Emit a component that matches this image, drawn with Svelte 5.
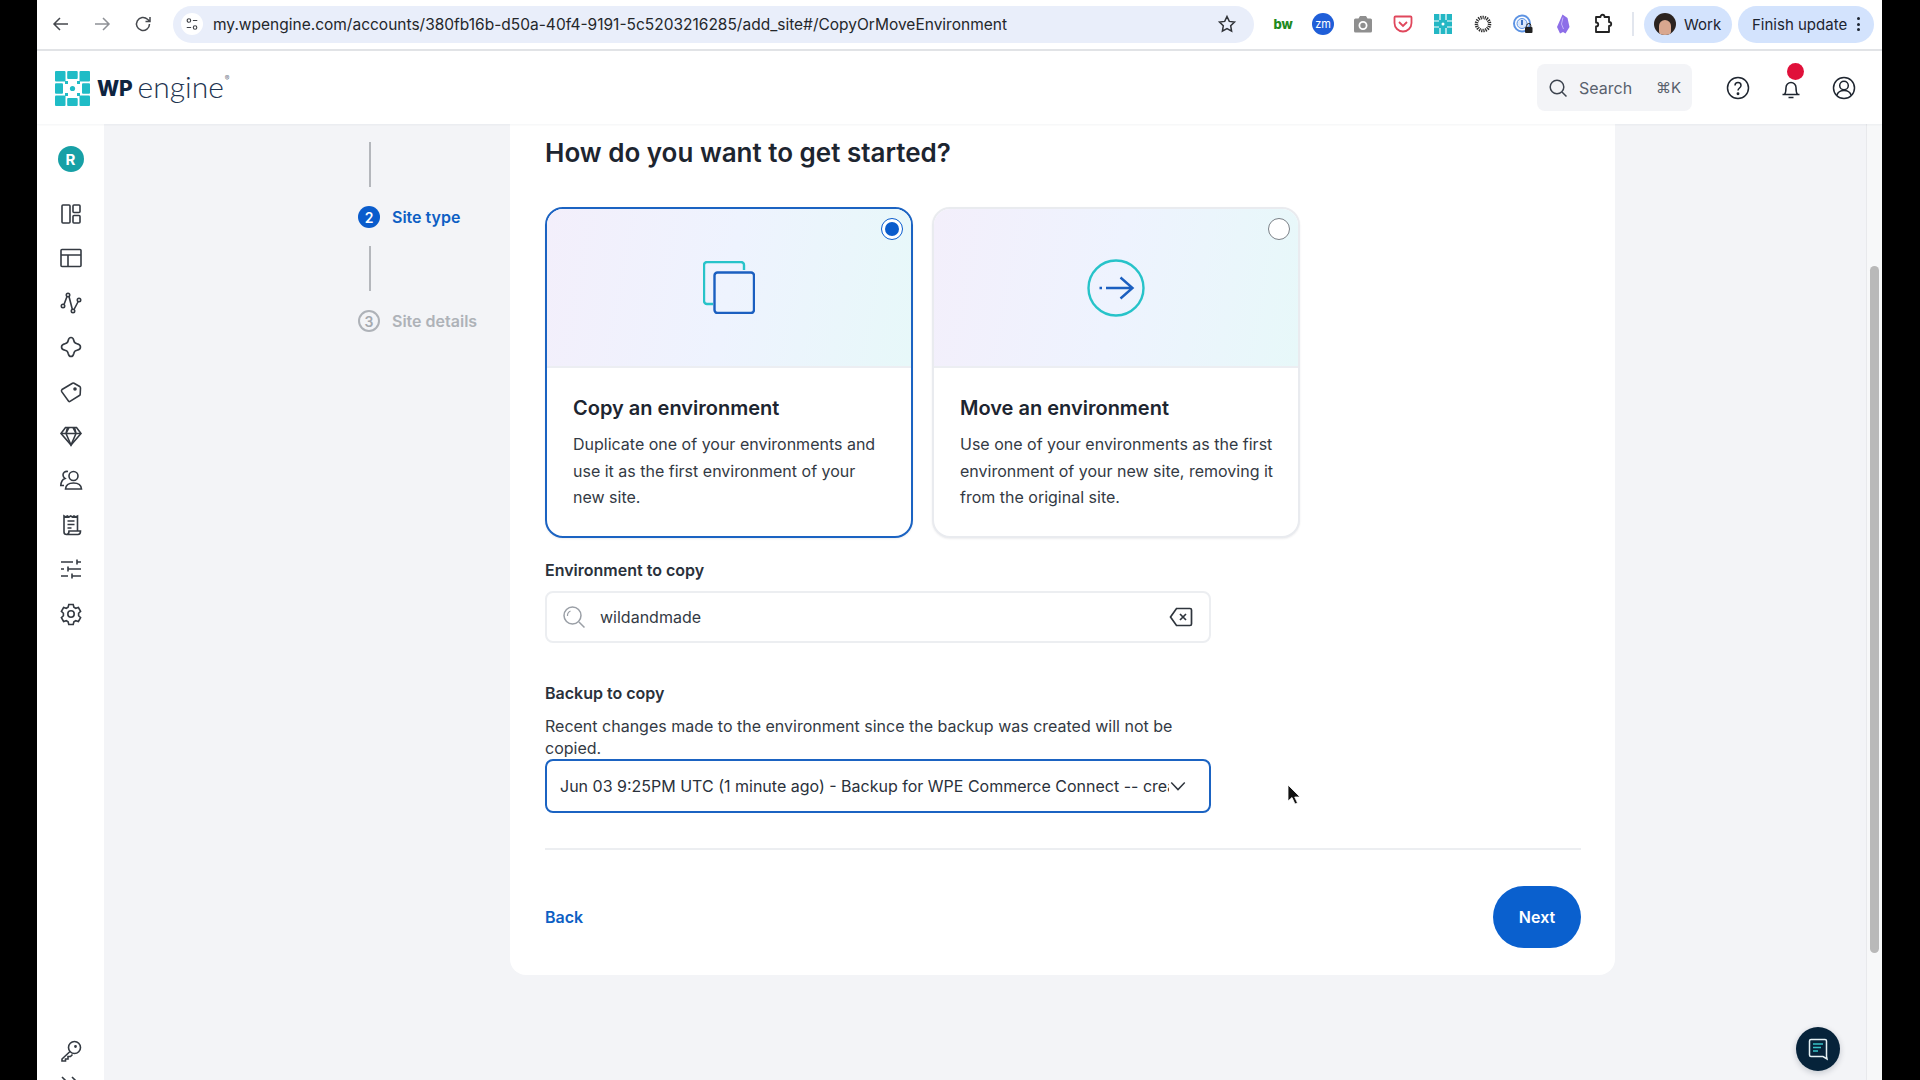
<script>
  const nav = [
    '<rect x="3" y="3" width="8" height="18" rx="1"/><rect x="14" y="3" width="7" height="7.5" rx="1"/><rect x="14" y="13.5" width="7" height="7.5" rx="1"/>',
    '<rect x="2" y="3.5" width="20" height="17" rx="1"/><path d="M2 9h20M9 9v11.5"/>',
    '<circle cx="4" cy="15" r="1.7"/><circle cx="9" cy="4" r="1.7"/><circle cx="14" cy="20" r="1.7"/><circle cx="20" cy="9" r="1.7"/><path d="M5 13.5 8 5.5M10 5.5l3.3 12.7M15 18.5l4.2-8"/>',
    '<path d="M12 2.5c1.6 0 2.4 1 2.8 3 .3 1.8 1.3 2.8 3.2 3.2 2 .4 3.5 1.5 3.5 3.3s-1.5 2.9-3.5 3.3c-1.9.4-2.9 1.4-3.2 3.2-.4 2-1.2 3-2.8 3s-2.4-1-2.8-3c-.3-1.8-1.3-2.8-3.2-3.2-2-.4-3.5-1.5-3.5-3.3s1.5-2.9 3.5-3.3c1.9-.4 2.9-1.4 3.2-3.2.4-2 1.2-3 2.8-3z"/>',
    '<path d="M3 9.5 13.5 3.2c.5-.3 1-.3 1.5 0l5.7 3.3c.5.3.8.8.8 1.4l-.3 6.3c0 .6-.3 1-.8 1.3L11 21.4c-.5.3-1 .2-1.4-.2L2.7 11.6c-.3-.6-.2-1.6.3-2.1z"/><circle cx="16" cy="9" r="1" fill="currentColor"/>',
    '<path d="M6.5 3.5h11L22 9.5 12 21 2 9.5z"/><path d="M2 9.5h20M8.5 3.5 7 9.5 12 21l5-11.5-1.500-6M7 9.500l3-6M17 9.500l-3-6"/>',
    '<circle cx="14.500" cy="8" r="4.500"/><path d="M6.500 21c.3-4 2.800-6 8-6s7.700 2 8 6zM9 3.500C6 3 4 4.500 4 7c0 1.600.8 2.700 2 3.500-2.700 1-4 3.600-4.200 7H5"/>',
    '<path d="M5 19V3l1.700 1L8.300 3l1.700 1 1.700-1 1.700 1L15 3l1.700 1L18.500 3v15M8.500 8h7M8.500 11.500h7M8.500 15h4M5 19c0 1.500 1 2.500 2.500 2.500h11.500c1.500 0 2.500-1 2.500-3.500H10c0 2-1 3.500-2.500 3.500"/>',
    '<path d="M2 5h12M18 5h4M18 2.500v5M2 12h3M9 12h13M9 9.500v5M2 19h7M13 19h9M13 16.500v5"/>',
    '<path d="M9.800 2.500h4.400l.7 2.800 1.800 1 2.700-.8 2.200 3.800-2 2v2.400l2 2-2.200 3.800-2.700-.8-1.800 1-.7 2.800H9.800l-.7-2.800-1.800-1-2.700.8-2.200-3.800 2-2v-2.400l-2-2 2.200-3.800 2.700.8 1.800-1z"/><circle cx="12" cy="12" r="3.200"/>'
  ];
</script>

<div class="frame">
  <div class="edge"></div>
  <div class="browser">
    <header class="chrome">
      <div class="tools">
        <svg viewBox="0 0 20 20"><path d="M17 10H3.500M9 4l-6 6 6 6"/></svg>
        <svg class="dim" viewBox="0 0 20 20"><path d="M3 10h13.500M11 4l6 6-6 6"/></svg>
        <svg viewBox="0 0 20 20"><path d="M16.500 10a6.500 6.500 0 1 1-2-4.700L17 7.500M17 3v4.500h-4.500"/></svg>
      </div>
      <div class="url">
        <span class="tune"><svg viewBox="0 0 16 16"><circle cx="4.500" cy="4" r="2"/><path d="M9 4h5M2 12h5"/><circle cx="11.500" cy="12" r="2"/></svg></span>
        <span class="addr">my.wpengine.com/accounts/380fb16b-d50a-40f4-9191-5c5203216285/add_site#/CopyOrMoveEnvironment</span>
        <svg class="star" viewBox="0 0 20 20"><path d="m10 2.500 2.300 4.900 5.200.7-3.800 3.700.9 5.300L10 14.500l-4.600 2.600.9-5.300L2.500 8.100l5.200-.7z"/></svg>
      </div>
      <div class="exts">
        <span class="ext bw">bw</span>
        <span class="ext zm">zm</span>
        <svg class="ext" viewBox="0 0 22 22"><path d="M2 7a1.500 1.500 0 0 1 1.500-1.500h3L8 3h6l1.500 2.500h3A1.500 1.500 0 0 1 20 7v11a1.500 1.500 0 0 1-1.500 1.500h-15A1.500 1.500 0 0 1 2 18z" fill="#8f8f8f"/><circle cx="11" cy="12.500" r="3.600" fill="none" stroke="#fff" stroke-width="1.800"/></svg>
        <svg class="ext" viewBox="0 0 22 22"><path d="M3.500 3.500h15a1 1 0 0 1 1 1V10a8.500 8.500 0 0 1-17 0V4.500a1 1 0 0 1 1-1z" fill="#fff" stroke="#e0475c" stroke-width="1.800"/><path d="m7 9 4 4 4-4" fill="none" stroke="#e0475c" stroke-width="1.800"/></svg>
        <svg class="ext" viewBox="0 0 22 22"><rect x="2" y="1" width="18" height="20" fill="#23b7c4"/><path d="M8 1v6M14 1v6M8 15v6M14 15v6M2 8h5M15 8h5M2 14h5M15 14h5" stroke="#fff" stroke-width="1.200"/><circle cx="11" cy="11" r="1.500" fill="#fff"/></svg>
        <svg class="ext" viewBox="0 0 22 22"><circle cx="11" cy="11" r="6.500" fill="none" stroke="#2b2b2b" stroke-width="3.600" stroke-dasharray="1.200 .9"/><circle cx="11" cy="11" r="4.500" fill="#fff"/></svg>
        <svg class="ext" viewBox="0 0 22 22"><circle cx="10" cy="10.500" r="8" fill="none" stroke="#5d93e3" stroke-width="2"/><circle cx="10" cy="10.500" r="5" fill="#dbe8fb" stroke="#5d93e3"/><path d="M10 7v5" stroke="#2a63ba" stroke-width="1.800"/><rect x="13" y="14" width="7.500" height="6" rx="1" fill="#222"/><path d="M14.800 14v-1.500a2 2 0 0 1 4 0V14" fill="none" stroke="#222"/></svg>
        <svg class="ext" viewBox="0 0 22 22"><path d="M10.500 1.500 15.500 5l2 9-4 6.500-2.500-1.500-3 1.500-3-6.500z" fill="#8d6ee8"/><path d="M11 4.500 9.500 11l2 5" fill="none" stroke="#c4b3f7"/></svg>
        <svg class="ext" viewBox="0 0 22 22"><path d="M4 4h4.500c0-3 4-3 4 0H17v5c3 0 3 4 0 4v6H4v-5.500c3 0 3-4 0-4z" fill="#fff" stroke="#222" stroke-width="1.800" stroke-linejoin="round"/></svg>
      </div>
      <div class="sep"></div>
      <div class="pill work"><span class="face"><span class="skin"></span></span>Work</div>
      <div class="pill finish">Finish update<span class="kebab"><i></i><i></i><i></i></span></div>
    </header>

    <div class="topbar">
      <div class="logo">
        <svg class="mark" viewBox="0 0 35 35">
          <g fill="#1fbcc6">
            <rect width="10.500" height="10.500" rx="1"/><rect x="12.200" width="10.500" height="8" rx="1"/><rect x="24.500" width="10.500" height="10.500" rx="1"/>
            <rect y="12.200" width="8" height="10.500" rx="1"/><rect x="27" y="12.200" width="8" height="10.500" rx="1"/>
            <rect y="24.500" width="10.500" height="10.500" rx="1"/><rect x="12.200" y="27" width="10.500" height="8" rx="1"/><rect x="24.500" y="24.500" width="10.500" height="10.500" rx="1"/>
            <circle cx="17.500" cy="17.500" r="2.600"/><rect x="10" y="10" width="3" height="3"/><rect x="22" y="10" width="3" height="3"/><rect x="10" y="22" width="3" height="3"/><rect x="22" y="22" width="3" height="3"/>
          </g>
        </svg>
        <span class="wp">WP</span><span class="engine">engine</span><span class="reg">®</span>
      </div>
      <div class="search">
        <svg viewBox="0 0 20 20"><circle cx="9" cy="9" r="6.800"/><path d="m14 14 4.500 4.500"/></svg>
        <span class="s-label">Search</span><span class="s-key">⌘K</span>
      </div>
      <div class="top-icons">
        <svg viewBox="0 0 26 26"><circle cx="13" cy="13" r="10.500"/><path d="M10 10.500c0-4 6-4 6 0 0 2.500-3 2.500-3 5"/><circle cx="13" cy="18.800" r=".7" fill="currentColor"/></svg>
        <span class="bell">
          <svg viewBox="0 0 26 26"><path d="M6.500 19.500c1.500-2 1.500-4 1.500-7a5 5 0 0 1 10 0c0 3 0 5 1.500 7zM4.500 19.500h17M10.500 22.500h5"/></svg>
          <i class="dot"></i>
        </span>
        <svg viewBox="0 0 26 26"><circle cx="13" cy="13" r="10.500"/><circle cx="13" cy="10.500" r="4.300"/><path d="M5.800 20.500c1-3.500 3.500-5 7.200-5s6.200 1.500 7.200 5"/></svg>
      </div>
    </div>

    <div class="workspace">
      <aside class="sidebar">
        <div class="avatar">R</div>
        <nav class="nav">
          {#each nav as icon}
            <svg class="nav-ico" viewBox="0 0 24 24">{@html icon}</svg>
          {/each}
        </nav>
        <div class="side-foot">
          <svg class="nav-ico" viewBox="0 0 24 24"><circle cx="15.500" cy="8.500" r="6"/><circle cx="16.500" cy="7.500" r=".6" fill="currentColor"/><path d="M11 12.500 3 20v2h3.500v-2H9v-2.500h2.500l2-2"/></svg>
          <svg class="nav-ico" viewBox="0 0 24 24"><path d="m3 4 6 6M9 4l0 0M13 4l6 6"/></svg>
        </div>
      </aside>

      <main class="content">
        <div class="stepper">
          <div class="line"></div>
          <div class="step active"><span class="num">2</span><span>Site type</span></div>
          <div class="line"></div>
          <div class="step muted"><span class="num">3</span><span>Site details</span></div>
        </div>

        <section class="panel">
          <h1>How do you want to get started?</h1>

          <div class="options">
            <div class="option selected">
              <span class="radio on"></span>
              <div class="art">
                <svg class="copy" viewBox="0 0 52 53" fill="none">
                  <path d="M41 9V4a3 3 0 0 0-3-3H4a3 3 0 0 0-3 3v36a3 3 0 0 0 3 3h6" stroke="#27c3c9" stroke-width="2.400"/>
                  <rect x="11.500" y="11.500" width="39.500" height="40.500" rx="3" stroke="#1b5fc0" stroke-width="2.400"/>
                </svg>
              </div>
              <div class="text">
                <h2>Copy an environment</h2>
                <p>Duplicate one of your environments and use it as the first environment of your new site.</p>
              </div>
            </div>

            <div class="option">
              <span class="radio"></span>
              <div class="art">
                <svg class="move" viewBox="0 0 58 58" fill="none">
                  <circle cx="29" cy="29" r="27.500" stroke="#27c3c9" stroke-width="2.400"/>
                  <path d="M12.500 29h2.500M19 29h26M33.500 18.500 45.500 29l-12 10.500" stroke="#1b5fc0" stroke-width="2.400"/>
                </svg>
              </div>
              <div class="text">
                <h2>Move an environment</h2>
                <p>Use one of your environments as the first environment of your new site, removing it from the original site.</p>
              </div>
            </div>
          </div>

          <div class="label first">Environment to copy</div>
          <div class="input">
            <svg class="in-search" viewBox="0 0 24 24"><circle cx="10.500" cy="10.500" r="8.500"/><path d="m17 17 5.500 5.500"/><path d="M5.500 11a5 5 0 0 1 3-5" stroke-width="1.200"/></svg>
            <span class="val">wildandmade</span>
            <svg class="clear" viewBox="0 0 24 24"><path d="M7.500 3.500H21a1.500 1.500 0 0 1 1.500 1.500v14a1.500 1.500 0 0 1-1.500 1.500H7.500L1.500 12z"/><path d="m11 9 6 6M17 9l-6 6"/></svg>
          </div>

          <div class="label second">Backup to copy</div>
          <p class="hint">Recent changes made to the environment since the backup was created will not be copied.</p>
          <div class="select">
            <span class="sel-text">Jun 03 9:25PM UTC (1 minute ago) - Backup for WPE Commerce Connect -- crea...</span>
            <svg viewBox="0 0 20 20"><path d="m2.500 6 7.500 8 7.500-8"/></svg>
          </div>

          <div class="footer">
            <span class="back">Back</span>
            <span class="next">Next</span>
          </div>
        </section>
      </main>

      <div class="track"><div class="thumb"></div></div>

      <button class="chat" aria-label="Chat">
        <svg viewBox="0 0 24 24" fill="none"><path d="M5 2.500h14a1.500 1.500 0 0 1 1.500 1.500v15.500l.5 2.500-4-2.500H5a1.500 1.500 0 0 1-1.500-1.500V4A1.500 1.500 0 0 1 5 2.500z" stroke="#e6f2f5" stroke-width="1.500"/><path d="M7 7h10M7 10.500h8M7 14h5" stroke="#39c3c9" stroke-width="1.600"/></svg>
      </button>
      <svg class="cursor" viewBox="0 0 14 22"><path d="M1 1v16l4-3.500L8 20l2.500-1-2.800-6H13z" fill="#111" stroke="#fff" stroke-width=".8"/></svg>
    </div>
  </div>
  <div class="edge right"></div>
</div>

<style>
  :global(body) { margin: 0; background: #000; }
  :global(*) { box-sizing: border-box; }
  .frame { display: flex; width: 1920px; height: 1080px; overflow: hidden; background: #000; font-family: Inter, "Noto Sans", sans-serif; color: #1f2630; }
  .edge { width: 37px; flex: none; background: #000; }
  .edge.right { width: 38px; }
  .browser { flex: 1; min-width: 0; display: flex; flex-direction: column; background: #f3f4f7; }

  .chrome { height: 51px; flex: none; display: flex; align-items: center; background: #fff; border-bottom: 2px solid #e1e3e6; padding: 0 8px 1px 14px; }
  .tools { display: flex; gap: 21px; width: 103px; flex: none; margin-right: 19px; }
  .tools svg { width: 20px; height: 20px; flex: none; fill: none; stroke: #45484d; stroke-width: 1.500; }
  .tools .dim { stroke: #8e9196; }
  .url { width: 1081px; flex: none; height: 37px; border-radius: 19px; background: #e9eefa; display: flex; align-items: center; padding-left: 8px; }
  .tune { width: 22px; height: 22px; border-radius: 50%; background: #fff; display: flex; align-items: center; justify-content: center; flex: none; margin-right: 10px; }
  .tune svg { width: 14px; height: 14px; fill: none; stroke: #3f4247; stroke-width: 1.300; }
  .addr { font-size: 15.500px; color: #24272b; white-space: nowrap; }
  .star { width: 20px; height: 20px; margin-left: auto; margin-right: 17px; fill: none; stroke: #303338; stroke-width: 1.500; flex: none; }
  .exts { display: flex; gap: 18px; margin-left: 18px; flex: none; align-items: center; }
  .ext { width: 22px; height: 22px; flex: none; }
  span.ext { display: flex; align-items: center; justify-content: center; }
  .bw { color: #1f8a1f; font-weight: 800; font-size: 13px; letter-spacing: -.2px; }
  .zm { background: #1f5ed8; border-radius: 50%; color: #fff; font-size: 11px; }
  .sep { width: 2px; height: 24px; background: #e2e6ee; margin: 0 10px 0 18px; flex: none; }
  .pill { height: 37px; border-radius: 19px; background: #d3e3fd; display: flex; align-items: center; font-size: 15px; color: #1c2430; flex: none; }
  .work { width: 88px; padding-left: 10px; gap: 8px; margin-right: 6px; }
  .face { width: 22px; height: 22px; border-radius: 50%; background: #2b2320; display: flex; align-items: flex-end; justify-content: center; overflow: hidden; flex: none; }
  .skin { width: 12px; height: 15px; border-radius: 6px 6px 4px 4px; background: #d9a78f; }
  .finish { width: 136px; padding-left: 14px; }
  .kebab { display: flex; flex-direction: column; gap: 2.500px; margin-left: 10px; }
  .kebab i { width: 3px; height: 3px; border-radius: 50%; background: #1c2430; }

  .topbar { height: 73px; flex: none; background: #fff; display: flex; align-items: center; padding: 0 25px 0 18px; position: relative; z-index: 2; box-shadow: 0 1px 2px rgba(20, 30, 50, .05); }
  .logo { display: flex; align-items: center; color: #0f2540; margin-top: 1px; }
  .mark { width: 35px; height: 35px; margin-right: 7px; flex: none; }
  .wp { font-weight: 800; font-size: 21px; letter-spacing: -.2px; margin-right: 5px; color: #0e2440; }
  .engine { font-family: Lato, sans-serif; font-weight: 300; font-size: 30px; line-height: 30px; color: #1e3450; margin-top: -5px; }
  .reg { font-size: 7px; align-self: flex-start; margin: 3px 0 0 1px; color: #6b7684; }
  .search { margin-left: auto; width: 155px; height: 47px; border-radius: 8px; background: #f3f4f7; display: flex; align-items: center; padding: 0 11px; font-size: 16px; color: #59616d; }
  .search svg { width: 20px; height: 20px; fill: none; stroke: #3d444f; stroke-width: 1.500; flex: none; margin-right: 11px; }
  .s-key { margin-left: auto; font-size: 15px; }
  .top-icons { display: flex; gap: 27px; margin-left: 33px; color: #1f2630; }
  .top-icons svg { width: 26px; height: 26px; display: block; fill: none; stroke: currentColor; stroke-width: 1.500; }
  .bell { position: relative; display: block; }
  .dot { position: absolute; left: 9px; top: -12px; width: 17px; height: 17px; border-radius: 50%; background: #e0103a; }

  .workspace { flex: 1; min-height: 0; display: flex; position: relative; }
  .sidebar { width: 67px; flex: none; background: #fff; display: flex; flex-direction: column; align-items: center; padding-top: 22px; overflow: hidden; }
  .avatar { width: 26px; height: 26px; border-radius: 50%; background: #17a0a6; color: #fff; font-weight: 700; font-size: 15px; display: flex; align-items: center; justify-content: center; flex: none; }
  .nav { display: flex; flex-direction: column; gap: 20.400px; margin-top: 30px; }
  .nav-ico { width: 24px; height: 24px; display: block; fill: none; stroke: #343a42; stroke-width: 1.600; flex: none; }
  .side-foot { margin-top: auto; display: flex; flex-direction: column; gap: 10px; margin-bottom: -17px; }

  .content { flex: 1; min-width: 0; display: flex; align-items: flex-start; }
  .stepper { width: 406px; flex: none; padding: 18px 0 0 254px; display: flex; flex-direction: column; }
  .line { width: 2px; height: 45px; background: #b4b7bc; margin-left: 11px; }
  .step { display: flex; align-items: center; gap: 12px; margin: 19px 0 18px; font-size: 16px; font-weight: 600; white-space: nowrap; height: 22px; }
  .num { width: 22px; height: 22px; border-radius: 50%; display: flex; align-items: center; justify-content: center; font-size: 14px; font-weight: 600; flex: none; }
  .active { color: #0d5fc4; }
  .active .num { background: #0a5ccc; color: #fff; }
  .muted { color: #aeb2b8; }
  .muted .num { border: 2px solid #aeb2b8; color: #a5a9af; }

  .panel { width: 1105px; flex: none; background: #fff; border-radius: 0 0 16px 16px; padding: 12px 34px 27px 35px; }
  h1 { margin: 0; font-size: 26px; line-height: 34px; font-weight: 600; color: #1d2530; }
  .options { display: flex; gap: 19px; margin-top: 37px; height: 331px; }
  .option { width: 368px; flex: none; border: 2px solid #e9ebef; border-radius: 18px; overflow: hidden; position: relative; background: #fff; box-shadow: 0 1px 2px rgba(20, 30, 50, .08); }
  .selected { border-color: #1b63c2; }
  .art { height: 159px; background: linear-gradient(100deg, #f3effb 0%, #eef3fe 50%, #e7f8f9 100%); border-bottom: 2px solid #eceef2; display: flex; align-items: center; justify-content: center; }
  .copy { width: 52px; height: 53px; }
  .move { width: 58px; height: 58px; }
  .radio { position: absolute; right: 8px; top: 9px; width: 22px; height: 22px; border-radius: 50%; border: 1.500px solid #7b8087; background: #fff; }
  .radio.on { border-color: #0a5ccc; }
  .radio.on::after { content: ""; position: absolute; inset: 3px; border-radius: 50%; background: #0a5ccc; }
  .text { padding: 26px 20px 0 26px; }
  h2 { margin: 0; font-size: 20px; line-height: 28px; font-weight: 600; color: #1d2530; }
  .text p { margin: 9px 0 0; font-size: 16px; line-height: 26.600px; color: #333a44; }

  .label { font-size: 16px; line-height: 20px; font-weight: 600; color: #2a313b; }
  .label.first { margin-top: 22px; }
  .label.second { margin-top: 40px; }
  .input { height: 52px; width: 666px; margin-top: 11px; border: 2px solid #eceef1; border-radius: 8px; display: flex; align-items: center; padding: 0 16px 0 15px; font-size: 16px; color: #333a44; }
  .in-search { width: 24px; height: 24px; fill: none; stroke: #9a9fa6; stroke-width: 1.500; flex: none; margin-right: 14px; }
  .clear { width: 24px; height: 24px; margin-left: auto; fill: none; stroke: #2f353d; stroke-width: 1.700; flex: none; }
  .hint { margin: 12px 0 0; width: 666px; font-size: 16px; line-height: 22px; color: #333a44; }
  .select { width: 666px; height: 54px; border: 2px solid #1b63c2; border-radius: 8px; display: flex; align-items: center; padding: 0 22px 0 13px; font-size: 16px; color: #2a313b; }
  .sel-text { white-space: nowrap; overflow: hidden; flex: 1; min-width: 0; }
  .select svg { width: 18px; height: 18px; flex: none; margin-left: 0; fill: none; stroke: #2f353d; stroke-width: 1.600; }
  .footer { margin-top: 35px; border-top: 2px solid #eceef1; padding-top: 36px; display: flex; align-items: center; justify-content: space-between; }
  .back { font-size: 16px; font-weight: 600; color: #0d5fc4; }
  .next { width: 88px; height: 62px; border-radius: 31px; background: #0a60ce; color: #fff; font-size: 16px; font-weight: 600; display: flex; align-items: center; justify-content: center; }

  .track { width: 16px; flex: none; background: #f7f8f9; border-left: 1px solid #e8e9ec; padding: 142px 0 0 3px; }
  .thumb { width: 9px; height: 687px; border-radius: 5px; background: #b9b9b9; }
  .chat { position: absolute; left: 1759px; top: 903px; width: 44px; height: 44px; border-radius: 50%; border: 0; padding: 10px; background: #06233a; box-shadow: 0 2px 6px rgba(0, 20, 40, .2); }
  .chat svg { width: 24px; height: 24px; display: block; }
  .cursor { position: absolute; left: 1250px; top: 660px; width: 14px; height: 22px; }
</style>
